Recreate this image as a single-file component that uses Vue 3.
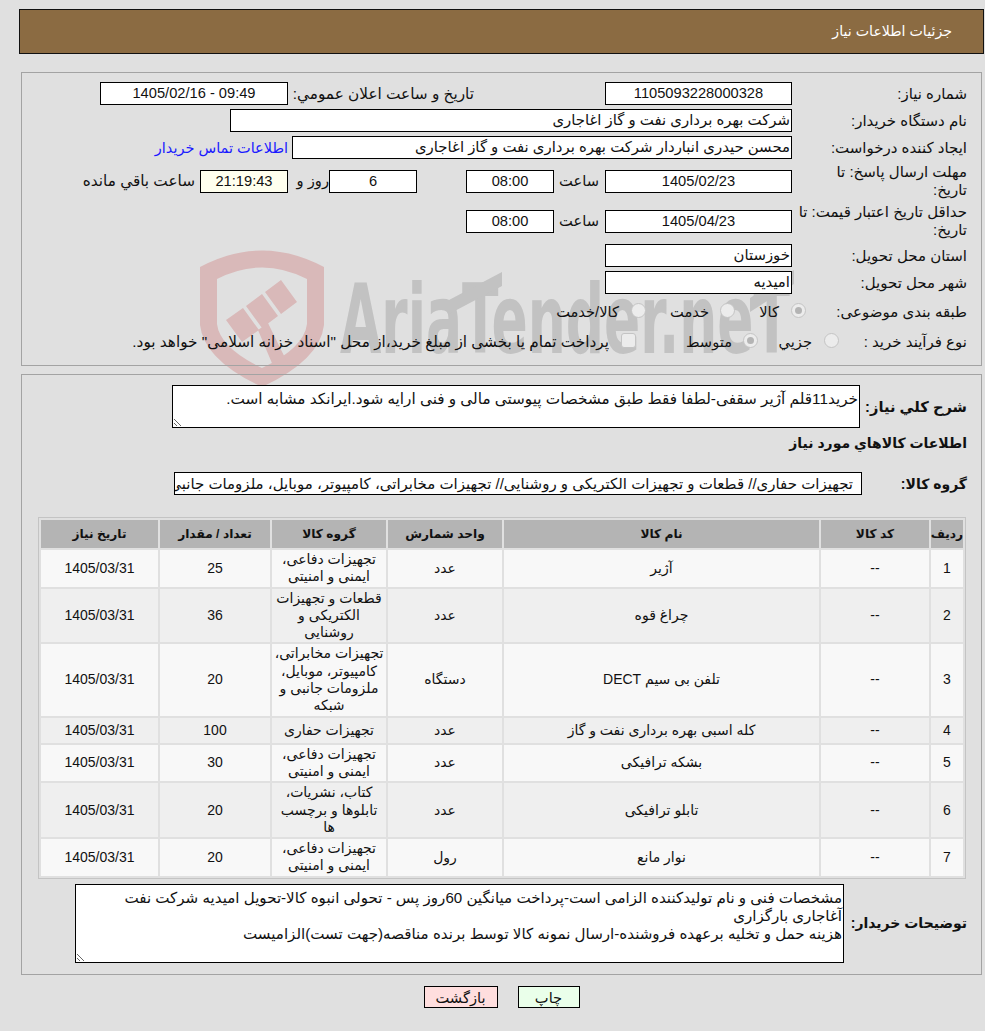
<script setup>
import { ref } from 'vue'

const sharh = ref('خرید11قلم آژیر سقفی-لطفا فقط طبق مشخصات پیوستی مالی و فنی ارایه شود.ایرانکد مشابه است.')
const tozihat = ref('مشخصات فنی و نام تولیدکننده الزامی است-پرداخت میانگین 60روز پس - تحولی انبوه کالا-تحویل امیدیه شرکت نفت آغاجاری بارگزاری\nهزینه حمل و تخلیه برعهده فروشنده-ارسال نمونه کالا توسط برنده مناقصه(جهت تست)الزامیست')

const defai = 'تجهیزات دفاعی، ایمنی و امنیتی'
const kalaha = [
  { id: 1, nam: 'آژیر', vahed: 'عدد', goroh: defai, tedad: 25 },
  { id: 2, nam: 'چراغ قوه', vahed: 'عدد', goroh: 'قطعات و تجهیزات الکتریکی و روشنایی', tedad: 36 },
  { id: 3, nam: 'تلفن بی سیم DECT', vahed: 'دستگاه', goroh: 'تجهیزات مخابراتی، کامپیوتر، موبایل، ملزومات جانبی و شبکه', tedad: 20 },
  { id: 4, nam: 'کله اسبی بهره برداری نفت و گاز', vahed: 'عدد', goroh: 'تجهیزات حفاری', tedad: 100 },
  { id: 5, nam: 'بشکه ترافیکی', vahed: 'عدد', goroh: defai, tedad: 30 },
  { id: 6, nam: 'تابلو ترافیکی', vahed: 'عدد', goroh: 'کتاب، نشریات، تابلوها و برچسب ها', tedad: 20 },
  { id: 7, nam: 'نوار مانع', vahed: 'رول', goroh: defai, tedad: 20 }
]
</script>

<template>
  <div class="page" dir="rtl">
    <!-- واترمارک پشت فرم -->
    <svg class="watermark" width="620" height="160" viewBox="0 0 620 160" aria-hidden="true">
      <path d="M10 27 Q72 -6 134 27 L134 85 Q130 120 72 147 Q14 120 10 85 Z M27 39 L27 84 Q30 108 72 128 Q114 108 117 84 L117 39 Q72 16 27 39 Z" fill="#d9b9b9" fill-rule="evenodd" />
      <path d="M56 66 L72 54 L88 76 L72 88 Z M75 52 L91 40 L107 62 L91 74 Z M36 80 L53 68 L69 90 L52 102 Z M68 90 L78 83 L100 128 L84 128 Z" fill="#d9b9b9" />
      <text x="150" y="113" class="wm-text" textLength="450" lengthAdjust="spacingAndGlyphs">AriaTender.neT</text>
      <path d="M259 60 L312 32 L312 46 L259 74 Z M560 58 L604 30 L604 44 L560 72 Z" fill="#c2c2c2" />
    </svg>

    <div class="content">
      <header class="titr">جزئیات اطلاعات نیاز</header>

      <section class="box box-info">
        <div class="row">
          <label class="lbl">شماره نیاز:</label>
          <div class="fld w187">1105093228000328</div>
          <span class="pub-lbl">تاریخ و ساعت اعلان عمومي:</span>
          <div class="fld w188" dir="ltr">1405/02/16 - 09:49</div>
        </div>
        <div class="row">
          <label class="lbl">نام دستگاه خریدار:</label>
          <div class="fld fld-r w562">شرکت بهره برداری نفت و گاز اغاجاری</div>
        </div>
        <div class="row">
          <label class="lbl">ایجاد کننده درخواست:</label>
          <div class="fld fld-r w500">محسن حیدری انباردار شرکت بهره برداری نفت و گاز اغاجاری</div>
          <a class="contact">اطلاعات تماس خریدار</a>
        </div>
        <div class="row row-2line">
          <label class="lbl">مهلت ارسال پاسخ: تا<br>تاریخ:</label>
          <div class="fld w187">1405/02/23</div>
          <span class="saat">ساعت</span>
          <div class="fld w88">08:00</div>
          <div class="fld w88 ms49">6</div>
          <span class="rooz">روز و</span>
          <div class="fld w88 yellow">21:19:43</div>
          <span class="mande">ساعت باقي مانده</span>
        </div>
        <div class="row row-2line">
          <label class="lbl">حداقل تاریخ اعتبار قیمت: تا<br>تاریخ:</label>
          <div class="fld w187">1405/04/23</div>
          <span class="saat">ساعت</span>
          <div class="fld w88">08:00</div>
        </div>
        <div class="row mt5">
          <label class="lbl">استان محل تحویل:</label>
          <div class="fld fld-r w187">خوزستان</div>
        </div>
        <div class="row">
          <label class="lbl">شهر محل تحویل:</label>
          <div class="fld fld-r w187">امیدیه</div>
        </div>
        <div class="row row-radio r-tabaghe">
          <label class="lbl">طبقه بندی موضوعی:</label>
          <div class="radios r1">
            <span class="radio on"></span><span class="opt o-kala">کالا</span>
            <span class="radio"></span><span class="opt o-khedmat">خدمت</span>
            <span class="radio"></span><span class="opt">کالا/خدمت</span>
          </div>
        </div>
        <div class="row row-radio r-farayand">
          <label class="lbl">نوع فرآیند خرید :</label>
          <div class="radios r2">
            <span class="radio"></span><span class="opt o-jozi">جزيي</span>
            <span class="radio on"></span><span class="opt o-motevaset">متوسط</span>
            <span class="check"></span><span class="opt o-long">پرداخت تمام یا بخشی از مبلغ خرید،از محل "اسناد خزانه اسلامی" خواهد بود.</span>
          </div>
        </div>
      </section>

      <section class="box box-kala">
        <div class="row-sharh">
          <label class="lbl-b">شرح کلي نیاز:</label>
          <textarea class="ta ta-sharh" v-model="sharh" readonly></textarea>
        </div>
        <h4 class="kala-title">اطلاعات کالاهاي مورد نیاز</h4>
        <div class="row-goroh">
          <label class="lbl-b">گروه کالا:</label>
          <div class="goroh">تجهیزات حفاری// قطعات و تجهیزات الکتریکی و روشنایی// تجهیزات مخابراتی، کامپیوتر، موبایل، ملزومات جانبی و شبکه// تجهیزات دفاعی، ایمنی و امنیتی</div>
        </div>

        <table class="jadval">
          <colgroup>
            <col style="width:32px"><col style="width:108px"><col style="width:315px"><col style="width:114px">
            <col style="width:114px"><col style="width:110px"><col style="width:117px">
          </colgroup>
          <thead>
            <tr>
              <th>ردیف</th>
              <th>کد کالا</th>
              <th>نام کالا</th>
              <th>واحد شمارش</th>
              <th>گروه کالا</th>
              <th>تعداد / مقدار</th>
              <th>تاریخ نیاز</th>
            </tr>
          </thead>
          <tbody>
            <tr v-for="k in kalaha" :key="k.id">
              <td>{{ k.id }}</td>
              <td>--</td>
              <td>{{ k.nam }}</td>
              <td>{{ k.vahed }}</td>
              <td>{{ k.goroh }}</td>
              <td>{{ k.tedad }}</td>
              <td>1405/03/31</td>
            </tr>
          </tbody>
        </table>

        <div class="row-tozihat">
          <label class="lbl-b">توضیحات خریدار:</label>
          <textarea class="ta ta-tozihat" v-model="tozihat" readonly></textarea>
        </div>
      </section>

      <div class="dokmeha">
        <button class="btn btn-print">چاپ</button>
        <button class="btn btn-back">بازگشت</button>
      </div>
    </div>
  </div>
</template>

<style>
html, body {
  margin: 0;
  background: #e0e0e0;
}
</style>

<style scoped>
.page {
  position: relative;
  width: 985px;
  height: 1031px;
  overflow: hidden;
  background: #e0e0e0;
  color: #111;
  font-family: "Liberation Sans", "DejaVu Sans", sans-serif;
  font-size: 14.67px;
}

.watermark {
  position: absolute;
  left: 190px;
  top: 240px;
}

.wm-text {
  direction: ltr;
  text-anchor: start;
  font-family: "DejaVu Sans", sans-serif;
  font-weight: bold;
  font-size: 96px;
  fill: #c2c2c2;
}

.content {
  position: relative;
  padding: 9px 1px 0 19px;
}

.titr {
  height: 43px;
  line-height: 43px;
  padding-right: 31px;
  background: #8b6b42;
  border: 1px solid #111;
  color: #fff;
  font-size: 14.2px;
}

.box {
  border: 1px solid #a3a3a3;
  margin: 0 2px;
}

.box-info {
  margin-top: 18px;
  height: 283px;
  padding: 9px 14px 0 0;
}

.box-kala {
  margin-top: 8px;
  height: 599px;
}

.row {
  display: flex;
  align-items: center;
  height: 23px;
  margin-bottom: 4px;
}

.row-2line {
  height: 36px;
  line-height: 18px;
}

.mt5 {
  margin-top: 5px;
}

.r-tabaghe {
  margin-top: 6px;
  margin-bottom: 7px;
}

.lbl {
  width: 170px;
  margin-left: 5px;
  flex: none;
  font-size: 15px;
}

.fld {
  box-sizing: border-box;
  height: 23px;
  line-height: 21px;
  border: 1px solid #000;
  background: #fff;
  text-align: center;
  flex: none;
}

.fld-r {
  text-align: right;
  padding-right: 1px;
  font-size: 14.9px;
}

.w187 { width: 187px; }
.w188 { width: 188px; }
.w88 { width: 88px; }
.w562 { width: 562px; }
.w500 { width: 500px; }

.yellow {
  background: #ffffee;
}

.pub-lbl {
  width: 181px;
  margin-left: 5px;
  margin-right: 131px;
  flex: none;
  white-space: nowrap;
  font-size: 15.3px;
}

.contact {
  color: #1a1aff;
  margin-right: 4px;
  font-size: 14.5px;
}

.saat {
  width: 42px;
  margin: 0 5px 0 4px;
  text-align: center;
}

.ms49 {
  margin-right: 49px;
}

.rooz {
  width: 33px;
  margin: 0 0 0 8px;
  white-space: nowrap;
}

.mande {
  margin-right: 5px;
  white-space: nowrap;
  font-size: 15.3px;
}

.radios {
  display: flex;
  align-items: center;
}

.radio,
.check {
  width: 13px;
  height: 13px;
  border: 1px solid #c4c4c4;
  background: #ececec;
  flex: none;
  position: relative;
  top: -1px;
}

.radio {
  border-radius: 50%;
}

.check {
  border-radius: 3px;
}

.radio.on::after {
  content: "";
  position: absolute;
  inset: 3px;
  border-radius: 50%;
  background: #b4b4b4;
}

.opt {
  margin-right: 12px;
  white-space: nowrap;
}

.o-long {
  font-size: 15.3px;
}

.r1 { margin-right: -14px; }
.r1 .o-kala { width: 20px; margin-left: 24px; }
.r1 .o-khedmat { width: 39px; margin-left: 24px; margin-right: 11px; }
.r2 { margin-right: -47px; }
.r2 .o-jozi { width: 34px; margin-left: 20px; }
.r2 .o-motevaset { width: 45px; margin-left: 51px; margin-right: 11px; }

.row-sharh {
  display: flex;
  align-items: center;
  margin: 10px 14px 0 0;
}

.lbl-b {
  font-weight: bold;
  white-space: nowrap;
  flex: none;
}

.row-sharh .lbl-b {
  width: 102px;
  margin-left: 5px;
}

.ta {
  display: block;
  box-sizing: border-box;
  border: 1px solid #000;
  background: #fff;
  font: inherit;
  font-size: 15.25px;
  color: inherit;
  padding: 4px 1px 1px;
  margin: 0;
  border-radius: 0;
  outline: none;
}

.ta-sharh {
  width: 688px;
  height: 43px;
  overflow: hidden;
}

.kala-title {
  margin: 6px 14px 0 0;
  font-size: 14px;
  line-height: 18px;
  font-weight: bold;
}

.row-goroh {
  display: flex;
  align-items: center;
  margin: 20px 14px 0 0;
}

.row-goroh .lbl-b {
  width: 98px;
  margin-left: 7px;
  font-size: 14px;
}

.goroh {
  box-sizing: border-box;
  width: 688px;
  height: 23px;
  line-height: 21px;
  border: 1px solid #000;
  background: #fff;
  padding: 0 8px 0 4px;
  overflow: hidden;
  white-space: nowrap;
  font-size: 15px;
}

.jadval {
  margin: 22px 15px 0 0;
  width: 927px;
  table-layout: fixed;
  border-collapse: separate;
  border-spacing: 2px;
  border: 1px solid #c4c4c4;
  text-align: center;
  font-size: 14px;
}

.jadval th {
  background: #b4b4b4;
  height: 28px;
  padding: 0;
  font-weight: bold;
  font-size: 12.2px;
}

.jadval td {
  padding: 1px 2px;
  height: 23px;
  line-height: 17.3px;
}

.jadval tbody tr:nth-child(odd) td {
  background: #f8f8f8;
}

.jadval tbody tr:nth-child(even) td {
  background: #efefef;
}

.row-tozihat {
  display: flex;
  align-items: center;
  margin: 5px 14px 0 0;
}

.row-tozihat .lbl-b {
  width: 123px;
  font-size: 14px;
}

.ta-tozihat {
  width: 769px;
  height: 79px;
  line-height: 18px;
  font-size: 15.1px;
  overflow: hidden;
}

.dokmeha {
  display: flex;
  justify-content: center;
  gap: 20px;
  margin-top: 11px;
}

.btn {
  height: 22px;
  padding: 0;
  border: 1px solid #000;
  font: inherit;
  color: inherit;
}

.btn-print {
  width: 62px;
  background: #eaffea;
}

.btn-back {
  width: 74px;
  background: #ffdede;
}
</style>
